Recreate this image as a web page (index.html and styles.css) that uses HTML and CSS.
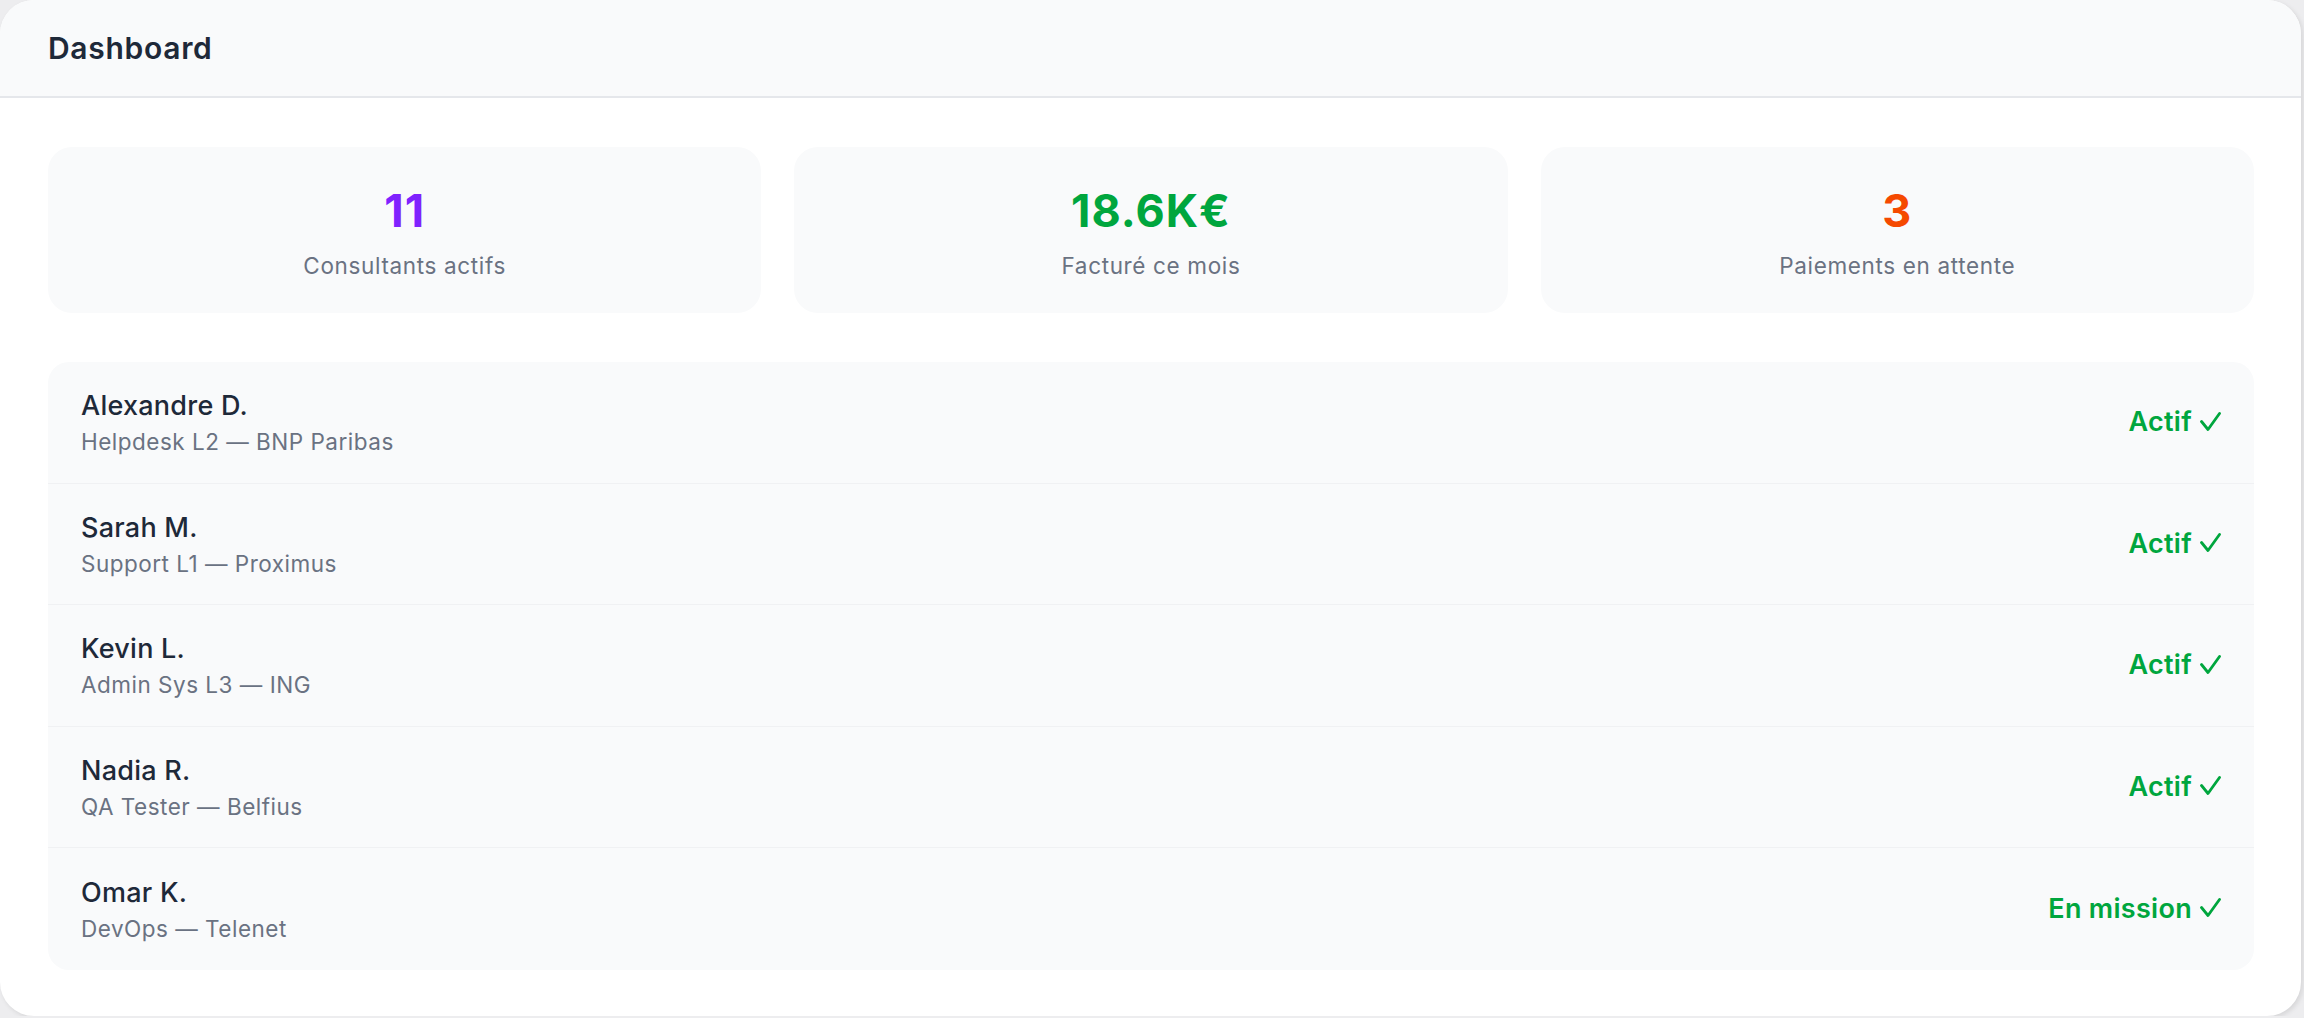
FILE: index.html
```html
<!DOCTYPE html>
<html lang="fr">
<head>
<meta charset="utf-8">
<title>Dashboard</title>
<link rel="stylesheet" href="styles.css">
</head>
<body>
<div class="window">
  <header class="topbar">
    <h1 class="title">Dashboard</h1>
  </header>
  <main class="content">
    <section class="stats">
      <div class="stat">
        <div class="stat-value purple">11</div>
        <div class="stat-label">Consultants actifs</div>
      </div>
      <div class="stat">
        <div class="stat-value green">18.6K€</div>
        <div class="stat-label">Facturé ce mois</div>
      </div>
      <div class="stat">
        <div class="stat-value orange">3</div>
        <div class="stat-label">Paiements en attente</div>
      </div>
    </section>
    <section class="list">
      <div class="row">
        <div class="who">
          <div class="name">Alexandre D.</div>
          <div class="role">Helpdesk L2 — BNP Paribas</div>
        </div>
        <div class="status">Actif <svg class="check" viewBox="0 0 21 19" aria-hidden="true"><path d="M1.5 9.5 L8 17.5 L19.5 1.5"/></svg></div>
      </div>
      <div class="row">
        <div class="who">
          <div class="name">Sarah M.</div>
          <div class="role">Support L1 — Proximus</div>
        </div>
        <div class="status">Actif <svg class="check" viewBox="0 0 21 19" aria-hidden="true"><path d="M1.5 9.5 L8 17.5 L19.5 1.5"/></svg></div>
      </div>
      <div class="row">
        <div class="who">
          <div class="name">Kevin L.</div>
          <div class="role">Admin Sys L3 — ING</div>
        </div>
        <div class="status">Actif <svg class="check" viewBox="0 0 21 19" aria-hidden="true"><path d="M1.5 9.5 L8 17.5 L19.5 1.5"/></svg></div>
      </div>
      <div class="row">
        <div class="who">
          <div class="name">Nadia R.</div>
          <div class="role">QA Tester — Belfius</div>
        </div>
        <div class="status">Actif <svg class="check" viewBox="0 0 21 19" aria-hidden="true"><path d="M1.5 9.5 L8 17.5 L19.5 1.5"/></svg></div>
      </div>
      <div class="row">
        <div class="who">
          <div class="name">Omar K.</div>
          <div class="role">DevOps — Telenet</div>
        </div>
        <div class="status">En mission <svg class="check" viewBox="0 0 21 19" aria-hidden="true"><path d="M1.5 9.5 L8 17.5 L19.5 1.5"/></svg></div>
      </div>
    </section>
  </main>
</div>
</body>
</html>
```

FILE: styles.css
```css
* { box-sizing: border-box; }

html, body {
  margin: 0;
  padding: 0;
  background: #ededef;
  font-family: Inter, "Noto Sans", "Liberation Sans", sans-serif;
  color: #1e2939;
}

.window {
  width: 2301px;
  height: 1016px;
  background: #ffffff;
  border-radius: 34px;
  overflow: hidden;
  box-shadow: 2px 2px 5px rgba(0, 0, 0, 0.10);
  display: flex;
  flex-direction: column;
}

.topbar {
  height: 98px;
  flex: none;
  background: #f9fafb;
  border-bottom: 2px solid #e5e7eb;
  display: flex;
  align-items: center;
  padding: 0 48px;
}

.title {
  margin: 0;
  font-size: 30px;
  font-weight: 600;
  line-height: 40px;
  letter-spacing: 0.7px;
  color: #1e2939;
}

.content {
  padding: 49px 47px 47px 48px;
  display: flex;
  flex-direction: column;
  gap: 49px;
}

.stats {
  display: grid;
  grid-template-columns: repeat(3, 1fr);
  gap: 33px;
}

.stat {
  background: #f9fafb;
  border-radius: 24px;
  height: 166px;
  padding-top: 37px;
  display: flex;
  flex-direction: column;
  align-items: center;
}

.stat-value {
  font-size: 45px;
  line-height: 54px;
  font-weight: 700;
  letter-spacing: 1px;
}

.stat-label {
  margin-top: 13px;
  font-size: 22.5px;
  line-height: 30px;
  letter-spacing: 0.65px;
  color: #6a7282;
}

.purple { color: #7f22fe; }
.green { color: #00a63e; }
.orange { color: #f54900; }

.list {
  background: #f9fafb;
  border-radius: 21px;
  overflow: hidden;
  display: flex;
  flex-direction: column;
}

.row {
  display: flex;
  align-items: center;
  justify-content: space-between;
  height: 121.5px;
  padding: 0 33px 0 33px;
  border-bottom: 1.5px solid #f0f1f3;
}

.row:last-child {
  border-bottom: none;
}

.who {
  display: flex;
  flex-direction: column;
}

.name {
  font-size: 27px;
  line-height: 40px;
  font-weight: 500;
  letter-spacing: 0.25px;
  color: #1e2939;
}

.role {
  font-size: 22.5px;
  line-height: 32px;
  letter-spacing: 0.5px;
  color: #6a7282;
}

.status {
  display: flex;
  align-items: baseline;
  gap: 8px;
  font-size: 27px;
  line-height: 40px;
  font-weight: 600;
  letter-spacing: 0.3px;
  color: #00a63e;
}

.check {
  width: 21px;
  height: 19px;
  align-self: center;
  margin-top: -2px;
  fill: none;
  stroke: #00a63e;
  stroke-width: 2.8;
  stroke-linecap: round;
  stroke-linejoin: round;
}
```
